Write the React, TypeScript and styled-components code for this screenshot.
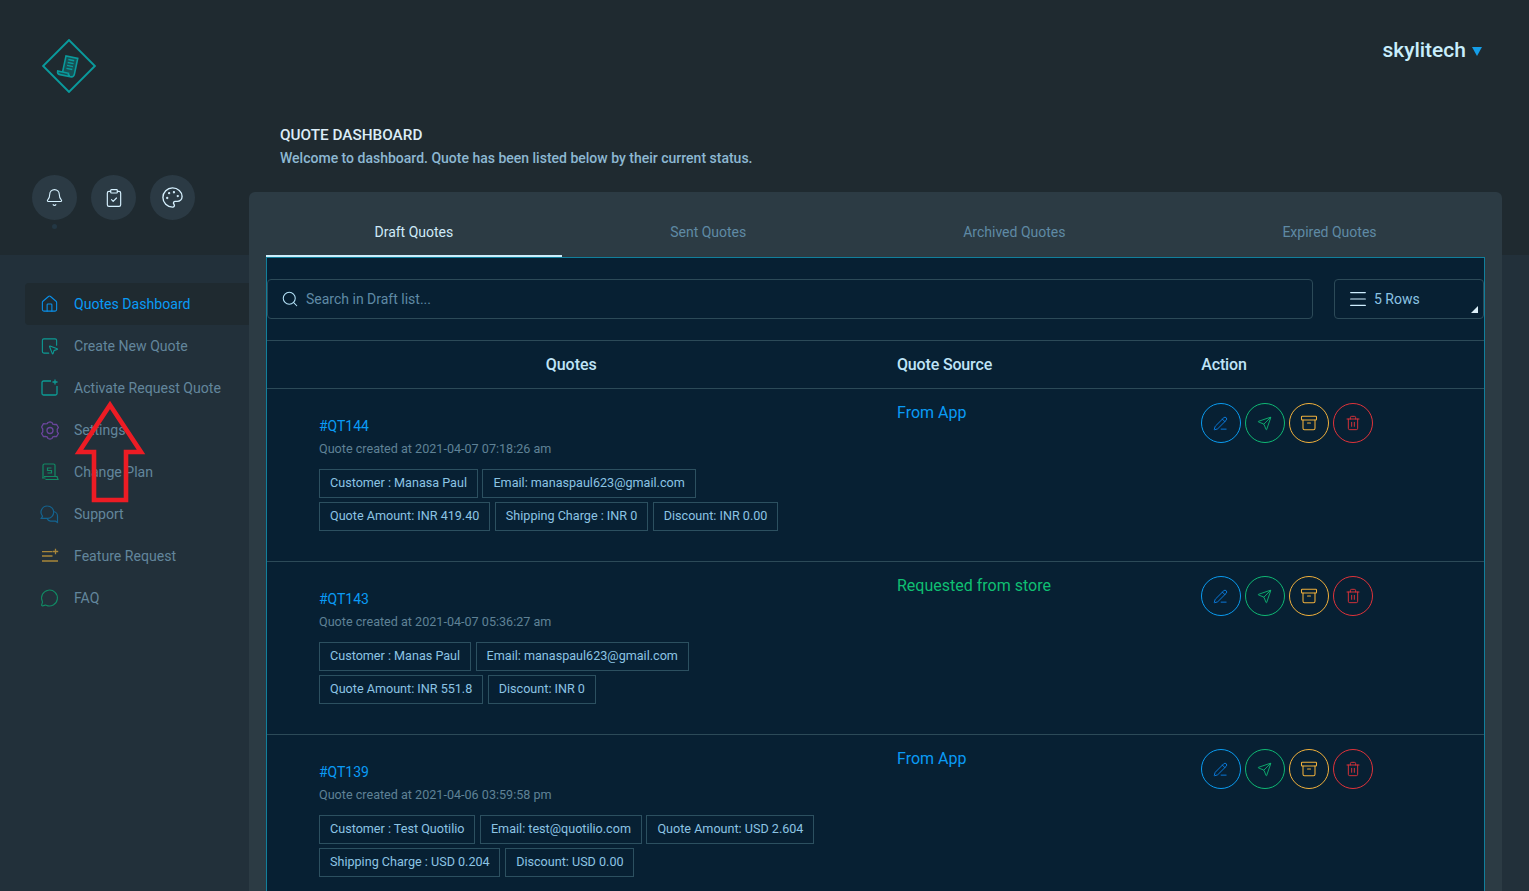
import React from "react";
import styled, { createGlobalStyle } from "styled-components";
import { Bell, ClipboardCheck, Palette, Home, SquareMousePointer, MessageCircle, Search, Menu, Send, Archive, Trash2, PencilLine } from "lucide-react";

const Global = createGlobalStyle`
  html, body { margin: 0; padding: 0; height: 100%; overflow: hidden; }
  body { font-family: Roboto, "Liberation Sans", sans-serif; background: #22303a; }
  * { box-sizing: border-box; }
`;

const Shell = styled.div`
  position: relative;
  display: grid;
  grid-template-columns: 249px 1fr;
  height: 891px;
  overflow: hidden;
  background: linear-gradient(#1f2a30 255px, #22303a 255px);
`;
const Sidebar = styled.aside`
  display: flex;
  flex-direction: column;
  padding: 39px 0 0 25px;
`;
const LogoBox = styled.div`
  width: 54px;
  height: 54px;
  margin-left: 17px;
  svg { display: block; }
`;
const QuickRow = styled.div`
  display: flex;
  gap: 14px;
  margin: 82px 0 0 7px;
`;
const QuickButton = styled.div`
  position: relative;
  width: 45px;
  height: 45px;
  border-radius: 50%;
  background: #2b3a44;
  color: #d6f1ff;
  display: flex;
  align-items: center;
  justify-content: center;
`;
const Dot = styled.span`
  position: absolute;
  left: 20px;
  top: 49px;
  width: 5px;
  height: 5px;
  border-radius: 50%;
  background: #233744;
`;
const Nav = styled.nav`
  display: flex;
  flex-direction: column;
  margin-top: 63px;
`;
const NavItem = styled.div<{ $active?: boolean }>`
  height: 42px;
  display: flex;
  align-items: center;
  gap: 15px;
  padding-left: 15px;
  font-size: 14.1px;
  border-radius: 4px 0 0 4px;
  color: ${(p) => (p.$active ? "#0a9bf5" : "#62869c")};
  background: ${(p) => (p.$active ? "#1f2a30" : "transparent")};
`;
const NavIcon = styled.span<{ $color: string }>`
  width: 19px;
  height: 19px;
  display: flex;
  align-items: center;
  justify-content: center;
  color: ${(p) => p.$color};
`;
const Main = styled.main`
  display: flex;
  flex-direction: column;
  padding-right: 27px;
  min-width: 0;
`;
const TopBar = styled.div`
  display: flex;
  justify-content: flex-end;
  align-items: center;
  gap: 6px;
  height: 24px;
  margin-top: 38px;
  padding-right: 20px;
  font-size: 21px;
  font-weight: 500;
  color: #c8eefc;
`;
const Caret = styled.span`
  width: 0;
  height: 0;
  margin-top: 3px;
  border-left: 5px solid transparent;
  border-right: 5px solid transparent;
  border-top: 9px solid #159ee8;
`;
const Heading = styled.div`
  margin: 63px 0 0 31px;
  height: 67px;
`;
const Title = styled.div`
  font-size: 15.3px;
  line-height: 20px;
  font-weight: 500;
  color: #dcedf7;
`;
const Subtitle = styled.div`
  margin-top: 3px;
  font-size: 14px;
  line-height: 20px;
  font-weight: 500;
  color: #8db8d2;
`;
const Panel = styled.section`
  flex: 1;
  background: #2c3b44;
  border-radius: 6px 6px 0 0;
  padding: 0 17px;
`;
const Tabs = styled.div`
  display: flex;
  height: 65px;
`;
const Tab = styled.div<{ $active?: boolean }>`
  flex: 1 1 auto;
  display: flex;
  align-items: flex-end;
  justify-content: center;
  padding: 0 108px 13px;
  font-size: 14px;
  line-height: 20px;
  color: ${(p) => (p.$active ? "#cfeaf8" : "#5f8aa5")};
  border-bottom: 2px solid ${(p) => (p.$active ? "#cdeefb" : "transparent")};
`;
const Body = styled.div`
  background: #072033;
  border: 1px solid #117f9c;
  border-bottom: 0;
  height: 700px;
`;
const Controls = styled.div`
  display: flex;
  gap: 21px;
  padding: 21px 0;
  height: 82px;
`;
const SearchBox = styled.div`
  flex: 1;
  height: 40px;
  display: flex;
  align-items: center;
  gap: 7px;
  padding-left: 13px;
  border: 1px solid #2c4a58;
  border-radius: 4px;
  font-size: 14px;
  color: #5f8aa5;
  svg { color: #b4e2f8; }
`;
const RowsSelect = styled.div`
  position: relative;
  width: 150px;
  height: 40px;
  display: flex;
  align-items: center;
  gap: 5px;
  padding-left: 12px;
  border: 1px solid #2c4a58;
  border-radius: 4px;
  font-size: 14px;
  color: #8cc4e4;
  svg { color: #cfeeff; }
`;
const Corner = styled.span`
  position: absolute;
  right: 5px;
  bottom: 5px;
  width: 0;
  height: 0;
  border-left: 7px solid transparent;
  border-bottom: 7px solid #dceff8;
`;
const TableGrid = styled.div`
  display: grid;
  grid-template-columns: 2fr 1fr 1fr;
`;
const TableHead = styled(TableGrid)`
  height: 49px;
  border-top: 1px solid #2c4a58;
  border-bottom: 1px solid #2c4a58;
  align-items: center;
  font-size: 16px;
  color: #bfe4f7;
`;
const HeadCell = styled.div<{ $center?: boolean }>`
  text-align: ${(p) => (p.$center ? "center" : "left")};
  padding-left: ${(p) => (p.$center ? "0" : "21.5px")};
  font-weight: 500;
  letter-spacing: ${(p) => (p.$center ? "0" : "-0.01em")};
`;
const Row = styled(TableGrid)`
  height: 173px;
  border-bottom: 1px solid #2c4a58;
`;
const QuoteCell = styled.div`
  padding: 28px 0 0 52px;
`;
const QuoteId = styled.div`
  font-size: 14px;
  line-height: 18px;
  color: #0a9bf5;
`;
const Created = styled.div`
  margin-top: 5px;
  font-size: 12.6px;
  line-height: 18px;
  color: #5f8296;
`;
const TagWrap = styled.div`
  display: flex;
  flex-wrap: wrap;
  gap: 4px 4.7px;
  max-width: 520px;
  margin-top: 11px;
`;
const Tag = styled.span`
  height: 29px;
  display: flex;
  align-items: center;
  padding: 0 9.8px 2px 10px;
  border: 1px solid #2c5060;
  font-size: 12.6px;
  color: #8cc4e4;
`;
const SourceCell = styled.div<{ $green?: boolean }>`
  padding: 14px 0 0 21.5px;
  font-size: 16px;
  line-height: 20px;
  color: ${(p) => (p.$green ? "#0fbf72" : "#0a9bf5")};
`;
const ActionCell = styled.div`
  display: flex;
  gap: 4px;
  padding: 14px 0 0 21px;
`;
const ActionButton = styled.div<{ $color: string; $icon?: string }>`
  width: 40px;
  height: 40px;
  border-radius: 50%;
  border: 1px solid ${(p) => p.$color};
  color: ${(p) => p.$icon || p.$color};
  display: flex;
  align-items: center;
  justify-content: center;
`;
const ArrowOverlay = styled.svg`
  position: absolute;
  left: 70px;
  top: 395px;
`;

const Logo = () => (
  <svg width="54" height="54" viewBox="0 0 54 54" fill="none" stroke="#0a9a9c">
    <rect x="8.700" y="8.700" width="36.600" height="36.600" transform="rotate(45 27 27)" strokeWidth="2" />
    <g transform="rotate(12 28 27)">
      <path d="M22 34V18h12v16c0 2-1.500 3.500-3.500 3.500H20c-1.500 0-3-1-3-3h11c0 1.200 1 2 2 2" strokeWidth="1.600" fill="#0a9a9c" fillOpacity="0.35" />
      <path d="M25 21h6M25 24h6M25 27h6M25 30h6" strokeWidth="1.400" />
    </g>
  </svg>
);
const ActivateIcon = () => (
  <svg width="18" height="18" viewBox="0 0 18 18" fill="none" stroke="currentColor" strokeWidth="1.300">
    <path d="M10 2H2.500a1.500 1.500 0 0 0-1.500 1.500v11A1.500 1.500 0 0 0 2.500 16h12a1.500 1.500 0 0 0 1.500-1.500V7" />
    <path d="M14 0.500v5M11.500 3h5" />
  </svg>
);
const SettingsIcon = () => (
  <svg width="18" height="19" viewBox="0 0 18 19" fill="none" stroke="currentColor" strokeWidth="1.300" strokeLinejoin="round">
    <path d="M7 1.500h0L9 .8l2 .7.800 1.700 1.900.3 1.800-.2 1 1.700.9 1.600-1.200 1.500.1 1.400-.1 1.400 1.200 1.500-.9 1.600-1 1.700-1.800-.2-1.900.3-.8 1.700-2 .7-2-.7-.8-1.700-1.900-.3-1.800.2-1-1.700-.9-1.600 1.200-1.500-.1-1.400.1-1.400L.6 6l.9-1.600 1-1.700 1.800.2 1.900-.3z" />
    <circle cx="9" cy="9.500" r="3" />
  </svg>
);
const PlanIcon = () => (
  <svg width="18" height="18" viewBox="0 0 18 18" fill="none" stroke="currentColor" strokeWidth="1.200">
    <path d="M2 15V2.500A1.500 1.500 0 0 1 3.500 1h9A1.500 1.500 0 0 1 14 2.500V13" />
    <path d="M1 15h3.500M4.500 16.500h12.500l-1-3H3" />
    <path d="M10.500 5H6.500v2.500h4V10h-4" />
  </svg>
);
const SupportIcon = () => (
  <svg width="19" height="19" viewBox="0 0 19 19" fill="none" stroke="currentColor" strokeWidth="1.200">
    <path d="M7.500 1a6.200 6.200 0 0 1 0 12.400H1.200l1.300-2.200A6.200 6.200 0 0 1 7.500 1z" />
    <path d="M13.500 6.500a5 5 0 0 1 4 5.500v5.500l-2-1.300h-5a5 5 0 0 1-3.500-2.800" />
  </svg>
);
const FeatureIcon = () => (
  <svg width="18" height="18" viewBox="0 0 18 18" fill="none" stroke="currentColor" strokeWidth="1.300">
    <path d="M1 4.700h10.500M1 9h10.500M1 14h16" />
    <path d="M14.500 1.800v5.500M11.800 4.500h5.400" />
  </svg>
);

const navItems: { label: string; color: string; icon: React.ReactNode; active?: boolean }[] = [
  { label: "Quotes Dashboard", color: "#0a8fe8", icon: <Home size={20} strokeWidth={1.4} />, active: true },
  { label: "Create New Quote", color: "#0d9a94", icon: <SquareMousePointer size={20} strokeWidth={1.4} /> },
  { label: "Activate Request Quote", color: "#0d9a94", icon: <ActivateIcon /> },
  { label: "Settings", color: "#6a459c", icon: <SettingsIcon /> },
  { label: "Change Plan", color: "#118a64", icon: <PlanIcon /> },
  { label: "Support", color: "#14638f", icon: <SupportIcon /> },
  { label: "Feature Request", color: "#a8863a", icon: <FeatureIcon /> },
  { label: "FAQ", color: "#118a64", icon: <MessageCircle size={20} strokeWidth={1.4} /> },
];

const quotes = [
  {
    id: "#QT144",
    created: "Quote created at 2021-04-07 07:18:26 am",
    source: "From App",
    tags: ["Customer : Manasa Paul", "Email: manaspaul623@gmail.com", "Quote Amount: INR 419.40", "Shipping Charge : INR 0", "Discount: INR 0.00"],
  },
  {
    id: "#QT143",
    created: "Quote created at 2021-04-07 05:36:27 am",
    source: "Requested from store",
    green: true,
    tags: ["Customer : Manas Paul", "Email: manaspaul623@gmail.com", "Quote Amount: INR 551.8", "Discount: INR 0"],
  },
  {
    id: "#QT139",
    created: "Quote created at 2021-04-06 03:59:58 pm",
    source: "From App",
    tags: ["Customer : Test Quotilio", "Email: test@quotilio.com", "Quote Amount: USD 2.604", "Shipping Charge : USD 0.204", "Discount: USD 0.00"],
  },
];

export default function App() {
  return (
    <>
      <Global />
      <Shell>
        <Sidebar>
          <LogoBox><Logo /></LogoBox>
          <QuickRow>
            <QuickButton><Bell size={19} strokeWidth={1.4} /><Dot /></QuickButton>
            <QuickButton><ClipboardCheck size={20} strokeWidth={1.4} /></QuickButton>
            <QuickButton><Palette size={23} strokeWidth={1.4} /></QuickButton>
          </QuickRow>
          <Nav>
            {navItems.map((n) => (
              <NavItem key={n.label} $active={n.active}>
                <NavIcon $color={n.color}>{n.icon}</NavIcon>
                {n.label}
              </NavItem>
            ))}
          </Nav>
        </Sidebar>
        <Main>
          <TopBar>skylitech<Caret /></TopBar>
          <Heading>
            <Title>QUOTE DASHBOARD</Title>
            <Subtitle>Welcome to dashboard. Quote has been listed below by their current status.</Subtitle>
          </Heading>
          <Panel>
            <Tabs>
              <Tab $active>Draft Quotes</Tab>
              <Tab>Sent Quotes</Tab>
              <Tab>Archived Quotes</Tab>
              <Tab>Expired Quotes</Tab>
            </Tabs>
            <Body>
              <Controls>
                <SearchBox><Search size={18} strokeWidth={1.4} />Search in Draft list...</SearchBox>
                <RowsSelect><Menu size={22} strokeWidth={1.3} />5 Rows<Corner /></RowsSelect>
              </Controls>
              <TableHead>
                <HeadCell $center>Quotes</HeadCell>
                <HeadCell>Quote Source</HeadCell>
                <HeadCell>Action</HeadCell>
              </TableHead>
              {quotes.map((q) => (
                <Row key={q.id}>
                  <QuoteCell>
                    <QuoteId>{q.id}</QuoteId>
                    <Created>{q.created}</Created>
                    <TagWrap>{q.tags.map((t) => <Tag key={t}>{t}</Tag>)}</TagWrap>
                  </QuoteCell>
                  <SourceCell $green={q.green}>{q.source}</SourceCell>
                  <ActionCell>
                    <ActionButton $color="#0a9bf0" $icon="#0a85f0"><PencilLine size={15} strokeWidth={1.4} /></ActionButton>
                    <ActionButton $color="#0fb874"><Send size={15} strokeWidth={1.4} /></ActionButton>
                    <ActionButton $color="#f0b03c"><Archive size={18} strokeWidth={1.4} /></ActionButton>
                    <ActionButton $color="#e0333a"><Trash2 size={16} strokeWidth={1.4} /></ActionButton>
                  </ActionCell>
                </Row>
              ))}
            </Body>
          </Panel>
        </Main>
        <ArrowOverlay width="80" height="112" viewBox="0 0 80 112">
          <polygon points="40,10 71,57 56,57 56,105 24,105 24,57 9,57" fill="none" stroke="#ed1c24" strokeWidth="4.600" />
        </ArrowOverlay>
      </Shell>
    </>
  );
}
